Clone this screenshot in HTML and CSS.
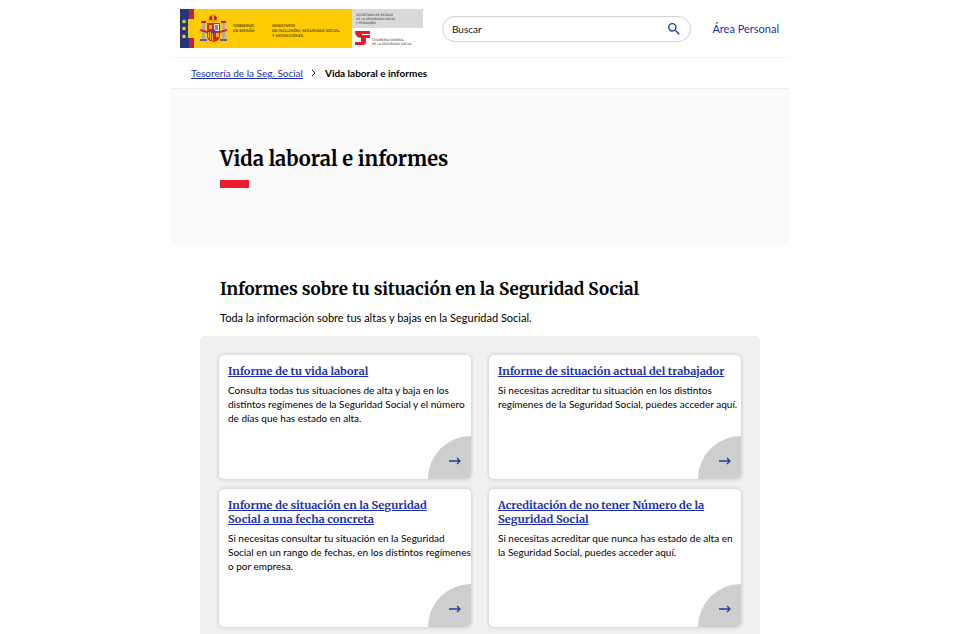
FILE: index.html
```html
<!DOCTYPE html>
<html lang="es">
<head>
  <meta charset="UTF-8">
  <meta name="viewport" content="width=device-width, initial-scale=1.0">
  <title>Vida laboral e informes</title>
  <link rel="stylesheet" href="styles.css">
</head>
<body>

  <div class="page">
    <!-- Header: logo, search and personal area -->
    <header class="header">
      <a class="logo" href="#">
        <svg width="243" height="39" viewBox="0 0 243 39" role="img">
          <!-- Flags strip -->
          <rect x="0" y="0" width="172" height="39" fill="#fecb00"/>
          <rect x="0" y="0" width="14" height="39" fill="#c8202f"/>
          <rect x="0" y="0" width="9" height="39" fill="#26357f"/>
          <rect x="8" y="10" width="6" height="19" fill="#fecb00"/>
          <path fill="#f2d71c" d="M4 10l.8 1.5 1.7.2-1.2 1.2.3 1.7L4 13.8l-1.6.8.3-1.7-1.2-1.2 1.7-.2zM4 17l.8 1.5 1.7.2-1.2 1.2.3 1.7-1.6-.8-1.6.8.3-1.7-1.2-1.2 1.7-.2zM4 25l.8 1.5 1.7.2-1.2 1.2.3 1.7-1.6-.8-1.6.8.3-1.7-1.2-1.2 1.7-.2z"/>
          <!-- Coat of arms -->
          <path fill="#b5291f" d="M29 10c0-3 2-4 4-4s4 1 4 4l-1 2h-6z"/>
          <path fill="#e8a713" d="M28 11h10v2H28zM32 5h2v6h-2z"/>
          <rect x="22" y="14" width="3" height="17" fill="#b9a999"/>
          <rect x="42" y="14" width="3" height="17" fill="#b9a999"/>
          <path fill="#b5291f" d="M21 12h5v2h-5zM41 12h5v2h-5zM20 20l7 2v2l-7-2zM47 20l-7 2v2l7-2z"/>
          <path fill="#5b6389" d="M20 30h7v2h-7zM40 30h7v2h-7z"/>
          <path fill="#c9262d" d="M27 14h13v13q0 5-6.5 6Q27 32 27 27z"/>
          <path fill="#e9dfd5" d="M34 15h5v7h-5z"/>
          <path fill="#c06a86" d="M35 16h3v5h-3z"/>
          <path fill="#f0ae20" d="M29 16h3v4h-3zM28 23h1v6h-1zM30 23h1v8h-1zM32 23h1v9h-1zM36 24h3v4h-3z"/>
          <circle cx="33.5" cy="22.5" r="2" fill="#364a91"/>
          <!-- Texts -->
          <g class="logo-text">
            <text x="53" y="18">GOBIERNO</text>
            <text x="53" y="23">DE ESPAÑA</text>
            <text x="92" y="18">MINISTERIO</text>
            <text x="92" y="23">DE INCLUSIÓN, SEGURIDAD SOCIAL</text>
            <text x="92" y="28">Y MIGRACIONES</text>
          </g>
          <rect x="172" y="0" width="71" height="19" fill="#d9d9d9"/>
          <g class="logo-small">
            <text x="176" y="7">SECRETARÍA DE ESTADO</text>
            <text x="176" y="11">DE LA SEGURIDAD SOCIAL</text>
            <text x="176" y="15">Y PENSIONES</text>
            <text x="192" y="32">TESORERÍA GENERAL</text>
            <text x="192" y="36">DE LA SEGURIDAD SOCIAL</text>
          </g>
          <path fill="#e31b2e" d="M175 22h15v3h-8v1h8v3h-4v4q0 3-3 3h-8v-3h6v-4q-6 0-6-7z"/>
        </svg>
      </a>
      <form class="search">
        <input type="search" class="search-input" aria-label="Buscar" placeholder="Buscar">
        <button type="submit" class="search-button" aria-label="Buscar">
          <svg width="16" height="16" viewBox="0 0 24 24" fill="#1a37a8">
            <path d="M15.5 14h-.79l-.28-.27A6.47 6.47 0 0 0 16 9.5 6.5 6.5 0 1 0 9.5 16c1.61 0 3.09-.59 4.23-1.57l.27.28v.79l5 4.99L20.49 19zm-6 0a4.5 4.5 0 1 1 0-9 4.5 4.5 0 0 1 0 9z"/>
          </svg>
        </button>
      </form>
      <a class="personal" href="#">Área Personal</a>
    </header>

    <nav class="breadcrumb">
      <a href="#">Tesorería de la Seg. Social</a>
      <svg width="6" height="8" viewBox="0 0 6 8" fill="none" stroke="#222"><path d="M1 1l3 3-3 3"/></svg>
      <span class="current">Vida laboral e informes</span>
    </nav>

    <div class="hero">
      <h1>Vida laboral e informes</h1>
    </div>

    <main>
      <h2>Informes sobre tu situación en la Seguridad Social</h2>
      <p class="intro">Toda la información sobre tus altas y bajas en la Seguridad Social.</p>

      <!-- Report cards -->
      <div class="cards">
        <article class="card">
          <h3><a href="#">Informe de tu vida laboral</a></h3>
          <p>Consulta todas tus situaciones de alta y baja en los distintos regímenes de la Seguridad Social y el número de días que has estado en alta.</p>
          <div class="corner">
            <svg width="12" height="8" viewBox="0 0 12 8"><path d="M0 4h11M8 1l3 3-3 3"/></svg>
          </div>
        </article>
        <article class="card">
          <h3><a href="#">Informe de situación actual del trabajador</a></h3>
          <p>Si necesitas acreditar tu situación en los distintos regímenes de la Seguridad Social, puedes acceder aquí.</p>
          <div class="corner">
            <svg width="12" height="8" viewBox="0 0 12 8"><path d="M0 4h11M8 1l3 3-3 3"/></svg>
          </div>
        </article>
        <article class="card">
          <h3><a href="#">Informe de situación en la Seguridad Social a una fecha concreta</a></h3>
          <p>Si necesitas consultar tu situación en la Seguridad Social en un rango de fechas, en los distintos regímenes o por empresa.</p>
          <div class="corner">
            <svg width="12" height="8" viewBox="0 0 12 8"><path d="M0 4h11M8 1l3 3-3 3"/></svg>
          </div>
        </article>
        <article class="card">
          <h3><a href="#">Acreditación de no tener Número de la Seguridad Social</a></h3>
          <p>Si necesitas acreditar que nunca has estado de alta en la Seguridad Social, puedes acceder aquí.</p>
          <div class="corner">
            <svg width="12" height="8" viewBox="0 0 12 8"><path d="M0 4h11M8 1l3 3-3 3"/></svg>
          </div>
        </article>
      </div>
    </main>
  </div>

</body>
</html>
```

FILE: styles.css
```css
* {
  box-sizing: border-box;
}
body {
  margin: 0;
  font-family: Lato, sans-serif;
  font-size: 10px;
  color: #000;
  background-color: #fff;
}
h1, h2, h3, p {
  margin: 0;
}
h1, h2, h3 {
  font-family: Merriweather, "DejaVu Serif Condensed", serif;
  font-weight: bold;
}
a {
  color: #1a2fb0;
}
.page {
  max-width: 618px;
  margin: 0 auto;
}
.header {
  display: flex;
  align-items: center;
  height: 58px;
  padding: 0 10px 0 9px;
  border-bottom: 1px solid #f5f5f5;
}
.logo svg {
  display: block;
  text-rendering: geometricPrecision;
}
.logo-text {
  font-family: "Open Sans", sans-serif;
  font-size: 4px;
  font-weight: 600;
  fill: #4a3c00;
}
.logo-small {
  font-family: "DejaVu Sans", sans-serif;
  font-size: 3px;
  fill: #333;
}
.search {
  flex: 1;
  display: flex;
  align-items: center;
  height: 26px;
  margin: 0 21px 0 19px;
  padding: 0 8px 0 9px;
  border: 1px solid #d2d2d2;
  border-radius: 13px;
}
.search-input {
  flex: 1;
  min-width: 0;
  padding: 0;
  border: none;
  outline: none;
  background: none;
  font-family: inherit;
  font-size: 10px;
}
.search-input::placeholder {
  color: #111;
}
.search-button {
  padding: 0;
  border: none;
  background: none;
  cursor: pointer;
}
.search-button svg {
  display: block;
}
.personal {
  font-size: 11px;
  text-decoration: none;
}
.breadcrumb {
  display: flex;
  align-items: center;
  gap: 8px;
  height: 31px;
  padding: 0 20px;
  border-bottom: 1px solid #ececec;
}
.current {
  font-weight: bold;
}
.hero {
  padding: 56px 49px 57px;
  background-color: #fafafa;
}
h1 {
  font-size: 20px;
  line-height: 28px;
}
h1::after {
  content: "";
  display: block;
  width: 29px;
  height: 8px;
  margin-top: 7px;
  background-color: #ea1c2d;
}
main {
  padding: 31px 29px 0;
}
h2 {
  padding: 0 20px;
  font-size: 17px;
  line-height: 26px;
}
.intro {
  padding: 8px 20px 10px;
  font-size: 11px;
  line-height: 16px;
}
.cards {
  display: grid;
  grid-template-columns: 1fr 1fr;
  gap: 10px 18px;
  padding: 19px;
  border-radius: 5px;
  background-color: #f0f0f0;
}
.card {
  display: flex;
  flex-direction: column;
  padding: 9px 0 0 9px;
  overflow: hidden;
  border-radius: 5px;
  background-color: #fff;
  box-shadow: 0 0 4px rgba(0, 0, 0, 0.2);
}
h3 {
  padding-right: 9px;
  font-size: 11px;
  line-height: 14px;
}
.card p {
  margin: 5px 0 11px;
  line-height: 14px;
}
.corner {
  display: flex;
  align-items: center;
  justify-content: flex-end;
  align-self: flex-end;
  width: 43px;
  height: 43px;
  margin-top: auto;
  padding: 6px 10px 0 0;
  border-radius: 43px 0 0 0;
  background-color: #cecece;
}
.corner svg {
  fill: none;
  stroke: #1d4290;
  stroke-width: 1.3;
}
```
